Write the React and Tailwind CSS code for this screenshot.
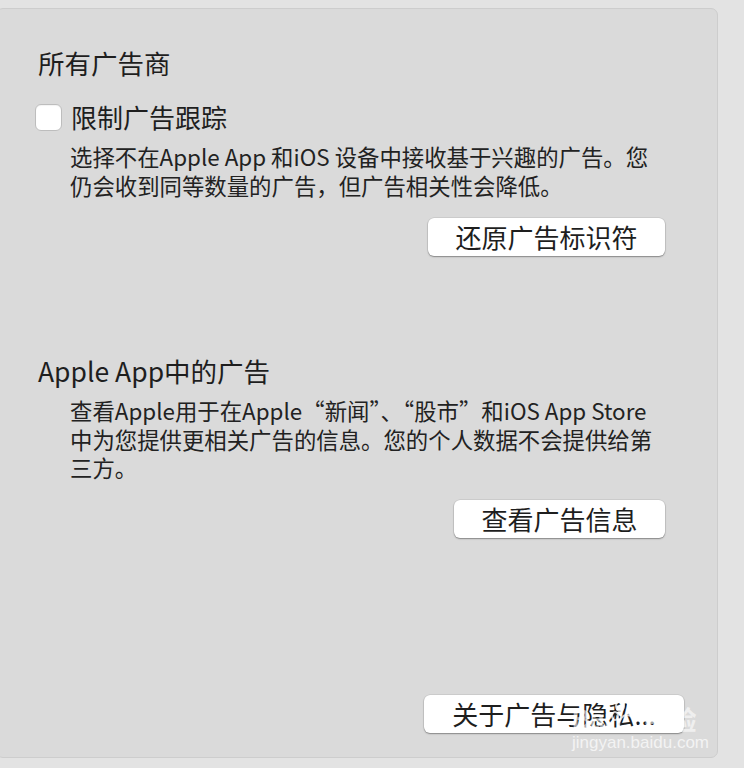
import React from "react";

const font = { fontFamily: '"Noto Sans CJK SC", "Noto Sans", sans-serif' };

function MacButton({ width, children }) {
  return (
    <div
      className="h-[38px] bg-white rounded-[6px] flex items-center justify-center text-[26px] leading-[38px] text-[#1e1e1e] shadow-[0_1px_1.5px_rgba(0,0,0,0.35),0_0_0_0.5px_rgba(0,0,0,0.12)]"
      style={{ width }}
    >
      {children}
    </div>
  );
}

export default function App() {
  return (
    <div className="w-[744px] h-[768px] bg-[#e3e3e3] pt-[8px] overflow-hidden" style={font}>
      <div className="relative -ml-[4px] w-[722px] h-[750px] bg-[#dadada] rounded-[7px] border border-[#cdcdcd] pl-[38px] pt-[37px] flex flex-col text-[#1e1e1e]">
        <div className="ml-[3px] text-[26.5px] leading-[34px]">所有广告商</div>

        <div className="mt-[20px] flex items-center gap-[9px] h-[34px]">
          <div className="w-[27px] h-[27px] bg-white rounded-[6px] border border-[#bdbdbd] shadow-[inset_0_1px_1px_rgba(0,0,0,0.05)]" />
          <div className="text-[26px] leading-[34px]">限制广告跟踪</div>
        </div>

        <div className="mt-[8px] pl-[35px] text-[22.4px] leading-[28.5px] text-[#222] whitespace-nowrap">
          选择不在Apple App<span className="pl-[5px]">和</span>iOS<span className="pl-[5px]">设备中接收基于兴趣的广告。您</span>
          <br />
          仍会收到同等数量的广告，但广告相关性会降低。
        </div>

        <div className="mt-[19px] flex justify-end pr-[52px]">
          <MacButton width={237}>还原广告标识符</MacButton>
        </div>

        <div className="mt-[98px] ml-[3px] text-[26.5px] leading-[34px]">Apple App中的广告</div>

        <div className="mt-[8px] pl-[35px] text-[22.4px] leading-[28.5px] text-[#222] whitespace-nowrap">
          查看Apple用于在Apple“新闻”、“股市”和iOS App Store
          <br />
          中为您提供更相关广告的信息。您的个人数据不会提供给第
          <br />
          三方。
        </div>

        <div className="mt-[18px] flex justify-end pr-[52px]">
          <MacButton width={211}>查看广告信息</MacButton>
        </div>

        <div className="mt-[157px] flex justify-end pr-[33px]">
          <MacButton width={260}>关于广告与隐私...</MacButton>
        </div>

        <div className="absolute left-[575px] top-[695px] pointer-events-none select-none">
          <div className="flex items-center text-[26px] leading-[30px] font-bold text-white/60">
            <span className="tracking-tight" style={{ fontFamily: '"Liberation Sans", sans-serif' }}>Bai</span>
            <svg width="34" height="34" viewBox="0 0 34 34" className="-mt-[10px]">
              <g fill="none" stroke="rgba(255,255,255,0.75)" strokeWidth="2">
                <ellipse cx="9" cy="9" rx="4" ry="5" />
                <ellipse cx="21" cy="7" rx="4" ry="5" />
                <ellipse cx="4" cy="19" rx="3" ry="4" />
                <ellipse cx="28" cy="17" rx="3" ry="4" />
                <path d="M8 29 C8 22 12 18 16 18 C21 18 25 23 25 29 C25 32 20 32 16 31 C12 32 8 32 8 29 Z" />
              </g>
            </svg>
            <span>经验</span>
          </div>
          <div className="text-[17px] leading-[20px] text-white/70 -mt-[1px]" style={{ fontFamily: '"Liberation Sans", sans-serif' }}>
            jingyan.baidu.com
          </div>
        </div>
      </div>
    </div>
  );
}
